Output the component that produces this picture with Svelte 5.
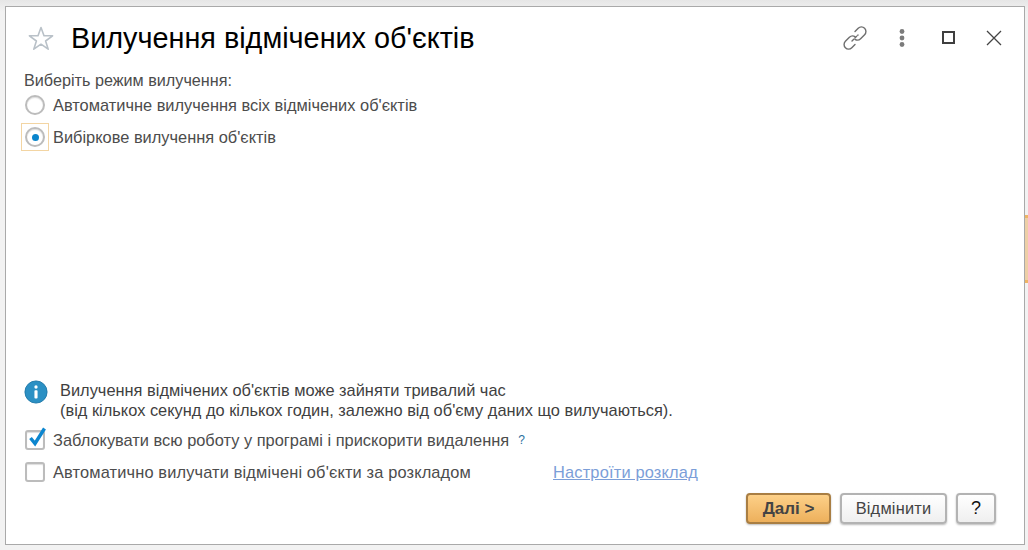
<script>
  const radios = [
    { label: "Автоматичне вилучення всіх відмічених об'єктів", on: false },
    { label: "Вибіркове вилучення об'єктів", on: true }
  ];
</script>

<div class="page">
  <div class="window">
    <header class="head">
      <svg class="star" width="28" height="26" viewBox="0 0 28 26"><path d="M14 2.5l3 8.3h8.6l-7 5.2 2.6 8.2-7.2-5-7.2 5 2.6-8.2-7-5.2H11z" fill="none" stroke="#b9c1c8" stroke-width="1.6" stroke-linejoin="round"/></svg>
      <h1>Вилучення відмічених об'єктів</h1>
      <div class="tools">
        <svg width="26" height="26" viewBox="0 0 26 26" fill="none" stroke="#6e6e6e" stroke-width="1.4" stroke-linecap="round"><path d="M13 6.5l3.2-3.2a4.5 4.5 0 0 1 6.4 6.4l-4 4a4.5 4.5 0 0 1-5.6.6"/><path d="M13 19.5l-3.2 3.2a4.5 4.5 0 0 1-6.4-6.4l4-4a4.5 4.5 0 0 1 5.6-.6"/><path d="M10 16l6-6" stroke-dasharray="2.5 1.6"/></svg>
        <svg width="6" height="20" viewBox="0 0 6 20" fill="#7b7b7b"><circle cx="3" cy="3.5" r="2.4"/><circle cx="3" cy="10" r="2.4"/><circle cx="3" cy="16.5" r="2.4"/></svg>
        <span class="max"></span>
        <svg width="16" height="16" viewBox="0 0 16 16" stroke="#444" stroke-width="1.3" fill="none"><path d="M1 1l14 14M15 1L1 15"/></svg>
      </div>
    </header>

    <main class="body">
      <div class="prompt">Виберіть режим вилучення:</div>
      <div class="radios">
        {#each radios as r}
          <label class="row">
            <span class="focus" class:active={r.on}><span class="radio" class:on={r.on}></span></span>
            <span>{r.label}</span>
          </label>
        {/each}
      </div>

      <div class="spacer"></div>

      <div class="info">
        <svg width="24" height="24" viewBox="0 0 26 26"><circle cx="13" cy="13" r="12" fill="#2b90c4" stroke="#1f78a8"/><circle cx="13" cy="7.6" r="1.8" fill="#fff"/><rect x="11.3" y="11" width="3.4" height="9" rx="1" fill="#fff"/></svg>
        <p>Вилучення відмічених об'єктів може зайняти тривалий час<br />(від кількох секунд до кількох годин, залежно від об'єму даних що вилучаються).</p>
      </div>

      <div class="check">
        <span class="box">
          <svg width="24" height="24" viewBox="0 0 24 24"><path d="M5.5 12l4.5 5.5L19.5 2.5" fill="none" stroke="#0c86cf" stroke-width="3.4"/></svg>
        </span>
        <span>Заблокувати всю роботу у програмі і прискорити видалення</span>
        <span class="hint">?</span>
      </div>
      <div class="check second">
        <span class="box"></span>
        <span class="long">Автоматично вилучати відмічені об'єкти за розкладом</span>
        <a href="#schedule">Настроїти розклад</a>
      </div>
    </main>

    <footer class="foot">
      <button class="primary">Далі &gt;</button>
      <button class="cancel">Відмінити</button>
      <button class="help">?</button>
    </footer>
  </div>
  <div class="edge"></div>
</div>

<style>
  :global(body) { margin: 0; background: #f1f1f1; }
  .page {
    width: 1028px; height: 550px; box-sizing: border-box; padding: 6px 3px 5px 5px;
    position: relative; overflow: hidden;
    font-family: "Liberation Sans", Arial, sans-serif; font-size: 16.4px; color: #4c4c4c;
    background: linear-gradient(#e6e6e6, #f2f2f2 12px);
  }
  .edge { position: absolute; right: 0; top: 215px; width: 3px; height: 68px; background: #edcfa6; border-top: 3px solid #eeb565; border-bottom: 3px solid #eeb565; box-sizing: border-box; }
  .window {
    height: 100%; box-sizing: border-box; background: #fff; border: 1px solid #a9a9a9;
    display: flex; flex-direction: column; padding: 0 19px 0 18px;
  }
  .head { display: flex; align-items: center; height: 61px; flex: none; }
  .star { margin-right: 16px; margin-left: 3px; }
  h1 { margin: 0; font-size: 28.8px; font-weight: 400; color: #000; flex: 1; line-height: 32px; }
  .tools { display: flex; align-items: center; }
  .tools svg:nth-child(1) { margin-right: 31px; }
  .tools svg:nth-child(2) { margin-right: 38px; }
  .max { width: 13px; height: 13px; border: 2px solid #3f3f3f; box-sizing: border-box; margin-right: 32px; margin-left: -1px; }
  .tools svg:last-child { margin-right: 3px; margin-left: -1px; }

  .body { flex: 1; display: flex; flex-direction: column; min-height: 0; }
  .prompt { line-height: 19px; margin-top: 3px; font-size: 16.2px; }
  .radios { display: flex; flex-direction: column; gap: 4px; margin-top: 1px; }
  .row { display: flex; align-items: center; height: 28px; gap: 4px; margin-left: -3px; }
  .focus { width: 28px; height: 28px; box-sizing: border-box; display: flex; align-items: center; justify-content: center; border: 1px solid transparent; }
  .focus.active { border-color: #f3d5a3; }
  .radio { width: 20px; height: 20px; border-radius: 50%; border: 2.5px solid #bcbcbc; box-sizing: border-box; background: #fff; display: flex; align-items: center; justify-content: center; box-shadow: inset 0 1px 1px #ddd; }
  .radio.on::after { content: ""; width: 7px; height: 7px; border-radius: 50%; background: #0a85cc; }
  .spacer { flex: 1; }

  .info { display: flex; gap: 12px; align-items: flex-start; }
  .info svg { margin-top: -2px; }
  .info p { margin: 0; line-height: 20px; color: #3f3f3f; margin-top: -2px; }

  .check { display: flex; align-items: center; height: 24px; margin-top: 8px; }
  .check.second { margin-top: 8px; }
  .box { width: 20px; height: 20px; box-sizing: border-box; border: 2px solid #bcbcbc; border-radius: 3px; flex: none; margin-right: 8px; position: relative; box-shadow: inset 0 1px 1px #ddd; margin-left: 1px; }
  .box svg { position: absolute; left: -2px; top: -6px; }
  .hint { font-size: 12px; color: #2a6f9e; margin-left: 9px; }
  .long { width: 500px; flex: none; letter-spacing: 0.14px; }
  a { color: #7b9ed8; text-decoration: underline; letter-spacing: 0.18px; }

  .foot { flex: none; display: flex; justify-content: flex-end; align-items: flex-start; gap: 9px; height: 60px; padding: 9px 9px 0 0; box-sizing: border-box; }
  button { height: 31px; font: inherit; border-radius: 4px; box-sizing: border-box; padding: 0; color: #444; }
  .primary { width: 85px; border: 2px solid #a97e43; background: linear-gradient(#fdd088, #edb05c); font-weight: 700; font-size: 17px; box-shadow: 0 1px 2px #bbb; }
  .cancel { width: 107px; border: 2px solid #b3b3b3; background: linear-gradient(#fff, #efefef); letter-spacing: 0.2px; box-shadow: 0 1px 2px #bbb; }
  .help { width: 40px; border: 2px solid #b3b3b3; background: linear-gradient(#fff, #efefef); box-shadow: 0 1px 2px #bbb; color: #111; font-size: 18px; }
</style>
